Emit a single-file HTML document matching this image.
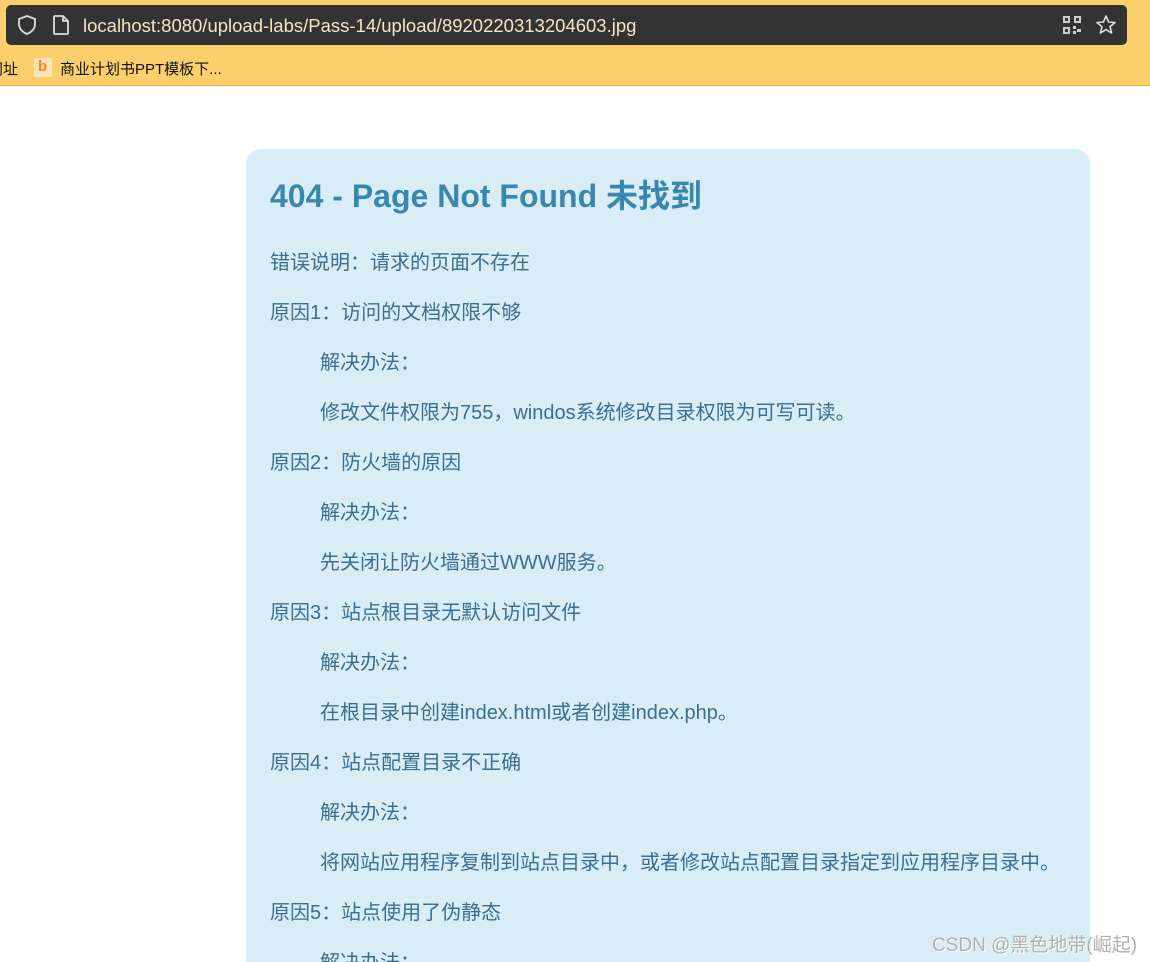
<!DOCTYPE html>
<html><head><meta charset="utf-8"><style>
html,body{margin:0;width:1150px;height:962px;overflow:hidden}
body{background:#fff;font-family:"Liberation Sans","Noto Sans CJK SC",sans-serif;position:relative}
.top{position:absolute;left:0;top:0;width:1150px;height:85px;background:#fbd06c;border-bottom:1px solid #e8b850}
.addr{position:absolute;left:6px;top:5px;width:1121px;height:40px;background:#333;border-radius:5px}
.url{position:absolute;left:77px;top:10px;font-size:18.5px;color:#f4e6c4;white-space:nowrap}
.bm{position:absolute;top:58px;font-size:15px;color:#111;white-space:nowrap}
.box{position:absolute;left:246px;top:149px;width:844px;height:813px;background:#d9edf6;border-radius:15px 15px 0 0}
h1{position:absolute;left:270px;top:171px;margin:0;font-size:32px;color:#3a87ad;font-weight:bold;white-space:nowrap}
.l{position:absolute;font-size:20px;color:#3b6f8e;white-space:nowrap;line-height:24px}
.wm{position:absolute;left:932px;top:930px;font-size:19px;color:#b0b0b0;text-shadow:1px 1px 0 #fff;white-space:nowrap}
</style></head><body>
<div class="top">
<div class="addr">
<svg style="position:absolute;left:10px;top:9px" width="22" height="22" viewBox="0 0 22 22"><path d="M11 2 L19 5 V10 C19 15 15 18.5 11 20 C7 18.5 3 15 3 10 V5 Z" fill="none" stroke="#ddd" stroke-width="1.8"/></svg>
<svg style="position:absolute;left:46px;top:9px" width="18" height="22" viewBox="0 0 18 22"><path d="M3 2 H11 L16 7 V19 Q16 20 15 20 H3 Q2 20 2 19 V3 Q2 2 3 2 Z M11 2 V7 H16" fill="none" stroke="#ddd" stroke-width="1.8"/></svg>
<div class="url">localhost:8080/upload-labs/Pass-14/upload/8920220313204603.jpg</div>
<svg style="position:absolute;left:1056px;top:10px" width="20" height="20" viewBox="0 0 20 20" fill="#ccc"><rect x="1" y="1" width="7" height="7"/><rect x="12" y="1" width="7" height="7"/><rect x="1" y="12" width="7" height="7"/><rect x="11" y="11" width="3" height="3"/><rect x="15" y="14" width="4" height="3"/><rect x="11" y="16" width="3" height="3"/><rect x="3" y="3" width="3" height="3" fill="#333"/><rect x="14" y="3" width="3" height="3" fill="#333"/><rect x="3" y="14" width="3" height="3" fill="#333"/></svg>
<svg style="position:absolute;left:1089px;top:9px" width="22" height="22" viewBox="0 0 22 22"><path d="M11 2 L13.6 8 L20 8.5 L15 12.7 L16.6 19 L11 15.6 L5.4 19 L7 12.7 L2 8.5 L8.4 8 Z" fill="none" stroke="#ddd" stroke-width="1.6" stroke-linejoin="round"/></svg>
</div>
<div class="bm" style="left:-12px">网址</div>
<div style="position:absolute;left:34px;top:58px;width:18px;height:19px;background:#fde4b8;border-radius:2px"><span style="position:absolute;left:4px;top:0px;font-size:15px;font-weight:bold;color:#f28b1c">b</span></div>
<div class="bm" style="left:60px">商业计划书PPT模板下...</div>
</div>
<div class="box"></div>
<h1>404 - Page Not Found 未找到</h1>
<div class="l" style="left:270px;top:251px">错误说明：请求的页面不存在</div>
<div class="l" style="left:270px;top:301px">原因1：访问的文档权限不够</div>
<div class="l" style="left:320px;top:351px">解决办法：</div>
<div class="l" style="left:320px;top:401px">修改文件权限为755，windos系统修改目录权限为可写可读。</div>
<div class="l" style="left:270px;top:451px">原因2：防火墙的原因</div>
<div class="l" style="left:320px;top:501px">解决办法：</div>
<div class="l" style="left:320px;top:551px">先关闭让防火墙通过WWW服务。</div>
<div class="l" style="left:270px;top:601px">原因3：站点根目录无默认访问文件</div>
<div class="l" style="left:320px;top:651px">解决办法：</div>
<div class="l" style="left:320px;top:701px">在根目录中创建index.html或者创建index.php。</div>
<div class="l" style="left:270px;top:751px">原因4：站点配置目录不正确</div>
<div class="l" style="left:320px;top:801px">解决办法：</div>
<div class="l" style="left:320px;top:851px">将网站应用程序复制到站点目录中，或者修改站点配置目录指定到应用程序目录中。</div>
<div class="l" style="left:270px;top:901px">原因5：站点使用了伪静态</div>
<div class="l" style="left:320px;top:951px">解决办法：</div>
<div class="wm">CSDN @黑色地带(崛起)</div>
</body></html>
